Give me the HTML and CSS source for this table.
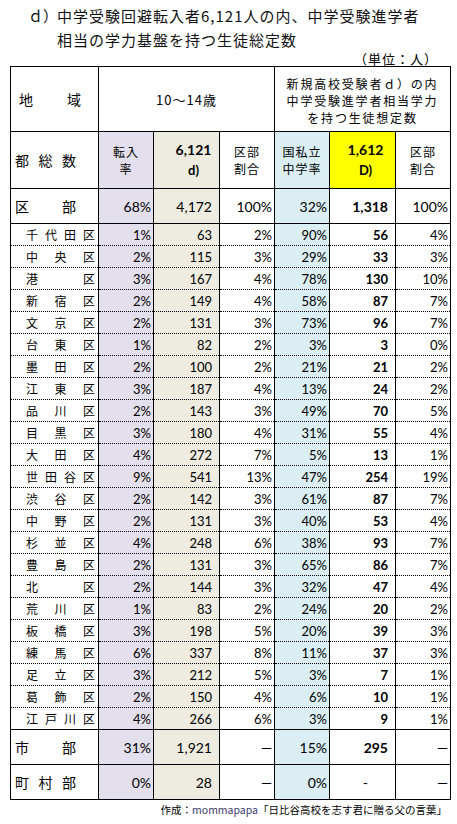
FILE: index.html
```html
<!DOCTYPE html>
<html lang="ja">
<head>
    <meta charset="UTF-8">
    <title>中学受験進学者相当の学力基盤を持つ生徒総定数</title>
    <link rel="stylesheet" href="styles.css">
</head>

<body>
    <!-- タイトル -->
    <div class="title">
        <span class="mark">ｄ）</span>
        <p>中学受験回避転入者6,121人の内、中学受験進学者<br>相当の学力基盤を持つ生徒総定数</p>
    </div>
    <p class="unit">（単位：人）</p>

    <table class="sheet">
        <colgroup>
            <col class="c1">
            <col class="c2">
            <col class="c3">
            <col class="c4">
            <col class="c5">
            <col class="c6">
            <col class="c7">
        </colgroup>
        <tr class="head1">
            <th class="area">地域</th>
            <th colspan="3">10〜14歳</th>
            <th colspan="3" class="note">新規高校受験者ｄ）の内<br>中学受験進学者相当学力<br>を持つ生徒想定数</th>
        </tr>
        <tr class="head2">
            <th class="big">都総数</th>
            <th class="lav">転入<br>率</th>
            <th class="beige num2"><b>6,121</b><b class="sub">d)</b></th>
            <th>区部<br>割合</th>
            <th class="blue">国私立<br>中学率</th>
            <th class="yellow num2"><b>1,612</b><b class="sub">D)</b></th>
            <th>区部<br>割合</th>
        </tr>
        <tr class="total">
            <td class="big">区部</td>
            <td class="lav">68%</td>
            <td class="beige cnt">4,172</td>
            <td>100%</td>
            <td class="blue">32%</td>
            <td class="bold cnt">1,318</td>
            <td>100%</td>
        </tr>
        <tr class="ward"><td class="nm">千代田区</td><td class="lav">1%</td><td class="beige cnt">63</td><td>2%</td><td class="blue">90%</td><td class="bold cnt">56</td><td>4%</td></tr>
        <tr class="ward"><td class="nm">中央区</td><td class="lav">2%</td><td class="beige cnt">115</td><td>3%</td><td class="blue">29%</td><td class="bold cnt">33</td><td>3%</td></tr>
        <tr class="ward"><td class="nm">港区</td><td class="lav">3%</td><td class="beige cnt">167</td><td>4%</td><td class="blue">78%</td><td class="bold cnt">130</td><td>10%</td></tr>
        <tr class="ward"><td class="nm">新宿区</td><td class="lav">2%</td><td class="beige cnt">149</td><td>4%</td><td class="blue">58%</td><td class="bold cnt">87</td><td>7%</td></tr>
        <tr class="ward"><td class="nm">文京区</td><td class="lav">2%</td><td class="beige cnt">131</td><td>3%</td><td class="blue">73%</td><td class="bold cnt">96</td><td>7%</td></tr>
        <tr class="ward"><td class="nm">台東区</td><td class="lav">1%</td><td class="beige cnt">82</td><td>2%</td><td class="blue">3%</td><td class="bold cnt">3</td><td>0%</td></tr>
        <tr class="ward"><td class="nm">墨田区</td><td class="lav">2%</td><td class="beige cnt">100</td><td>2%</td><td class="blue">21%</td><td class="bold cnt">21</td><td>2%</td></tr>
        <tr class="ward"><td class="nm">江東区</td><td class="lav">3%</td><td class="beige cnt">187</td><td>4%</td><td class="blue">13%</td><td class="bold cnt">24</td><td>2%</td></tr>
        <tr class="ward"><td class="nm">品川区</td><td class="lav">2%</td><td class="beige cnt">143</td><td>3%</td><td class="blue">49%</td><td class="bold cnt">70</td><td>5%</td></tr>
        <tr class="ward"><td class="nm">目黒区</td><td class="lav">3%</td><td class="beige cnt">180</td><td>4%</td><td class="blue">31%</td><td class="bold cnt">55</td><td>4%</td></tr>
        <tr class="ward"><td class="nm">大田区</td><td class="lav">4%</td><td class="beige cnt">272</td><td>7%</td><td class="blue">5%</td><td class="bold cnt">13</td><td>1%</td></tr>
        <tr class="ward"><td class="nm">世田谷区</td><td class="lav">9%</td><td class="beige cnt">541</td><td>13%</td><td class="blue">47%</td><td class="bold cnt">254</td><td>19%</td></tr>
        <tr class="ward"><td class="nm">渋谷区</td><td class="lav">2%</td><td class="beige cnt">142</td><td>3%</td><td class="blue">61%</td><td class="bold cnt">87</td><td>7%</td></tr>
        <tr class="ward"><td class="nm">中野区</td><td class="lav">2%</td><td class="beige cnt">131</td><td>3%</td><td class="blue">40%</td><td class="bold cnt">53</td><td>4%</td></tr>
        <tr class="ward"><td class="nm">杉並区</td><td class="lav">4%</td><td class="beige cnt">248</td><td>6%</td><td class="blue">38%</td><td class="bold cnt">93</td><td>7%</td></tr>
        <tr class="ward"><td class="nm">豊島区</td><td class="lav">2%</td><td class="beige cnt">131</td><td>3%</td><td class="blue">65%</td><td class="bold cnt">86</td><td>7%</td></tr>
        <tr class="ward"><td class="nm">北区</td><td class="lav">2%</td><td class="beige cnt">144</td><td>3%</td><td class="blue">32%</td><td class="bold cnt">47</td><td>4%</td></tr>
        <tr class="ward"><td class="nm">荒川区</td><td class="lav">1%</td><td class="beige cnt">83</td><td>2%</td><td class="blue">24%</td><td class="bold cnt">20</td><td>2%</td></tr>
        <tr class="ward"><td class="nm">板橋区</td><td class="lav">3%</td><td class="beige cnt">198</td><td>5%</td><td class="blue">20%</td><td class="bold cnt">39</td><td>3%</td></tr>
        <tr class="ward"><td class="nm">練馬区</td><td class="lav">6%</td><td class="beige cnt">337</td><td>8%</td><td class="blue">11%</td><td class="bold cnt">37</td><td>3%</td></tr>
        <tr class="ward"><td class="nm">足立区</td><td class="lav">3%</td><td class="beige cnt">212</td><td>5%</td><td class="blue">3%</td><td class="bold cnt">7</td><td>1%</td></tr>
        <tr class="ward"><td class="nm">葛飾区</td><td class="lav">2%</td><td class="beige cnt">150</td><td>4%</td><td class="blue">6%</td><td class="bold cnt">10</td><td>1%</td></tr>
        <tr class="ward last"><td class="nm">江戸川区</td><td class="lav">4%</td><td class="beige cnt">266</td><td>6%</td><td class="blue">3%</td><td class="bold cnt">9</td><td>1%</td></tr>
        <tr class="total">
            <td class="big">市部</td>
            <td class="lav">31%</td>
            <td class="beige cnt">1,921</td>
            <td>—</td>
            <td class="blue">15%</td>
            <td class="bold cnt">295</td>
            <td>—</td>
        </tr>
        <tr class="total">
            <td class="big">町村部</td>
            <td class="lav">0%</td>
            <td class="beige cnt">28</td>
            <td>—</td>
            <td class="blue">0%</td>
            <td class="cnt hy">-</td>
            <td>—</td>
        </tr>
    </table>

    <p class="credit">作成：<span class="who">mommapapa</span>「日比谷高校を志す君に贈る父の言葉」</p>
</body>

</html>
```

FILE: styles.css
```css
* {
    padding: 0;
    margin: 0;
}

body {
    width: 457px;
    background: #fff;
    color: #000;
    font-family: "Noto Sans CJK JP", sans-serif;
}

/* タイトル */
.title {
    display: flex;
    padding: 4px 0 0 28px;
    font-size: 15px;
    line-height: 24px;
    letter-spacing: 1px;
    color: #111;
}

.title .mark {
    flex: none;
    width: 29px;
    letter-spacing: 0;
}

.title p {
    white-space: nowrap;
}

.unit {
    text-align: right;
    padding-right: 19px;
    font-size: 13px;
    line-height: 14px;
    letter-spacing: 1px;
}

/* 表 */
.sheet {
    margin-left: 10px;
    width: 440px;
    table-layout: fixed;
    border-collapse: collapse;
    font-family: Lato, "Noto Sans CJK JP", sans-serif;
    font-size: 13px;
}

.sheet col.c1 { width: 88px; }
.sheet col.c2 { width: 55px; }
.sheet col.c3 { width: 66px; }
.sheet col.c4 { width: 55px; }
.sheet col.c5 { width: 55px; }
.sheet col.c6 { width: 66px; }
.sheet col.c7 { width: 55px; }

.sheet th,
.sheet td {
    border: 1px solid #000;
    padding: 0 2px 0 0;
    text-align: right;
    vertical-align: middle;
    white-space: nowrap;
}

.sheet th {
    font-weight: normal;
    text-align: center;
    font-family: "Noto Sans CJK JP", sans-serif;
    font-size: 12px;
    line-height: 17px;
    letter-spacing: 1px;
    padding: 0;
}

.head1 {
    height: 65px;
}

.head1 .area {
    text-align: justify;
    text-align-last: justify;
    padding: 0 16px 0 8px;
    font-size: 14px;
}

.head1 th {
    font-size: 13px;
}

.head1 .note {
    font-size: 12px;
    letter-spacing: 1.8px;
    line-height: 17px;
    padding-top: 2px;
}

.head2 {
    height: 57px;
}

.head2 .num2 b {
    display: block;
    font-family: Lato, sans-serif;
    font-size: 14px;
    line-height: 20px;
    letter-spacing: 0;
    padding-left: 14px;
}

.head2 .yellow b {
    padding-left: 6px;
}

.head2 .num2 .sub {
    font-size: 13px;
}

.sheet .big {
    text-align: justify;
    text-align-last: justify;
    padding: 0 22px 0 4px;
    font-family: "Noto Sans CJK JP", sans-serif;
    font-size: 14px;
    font-weight: normal;
    letter-spacing: 0;
}

.total {
    height: 35px;
}

.total td {
    font-size: 14px;
}

.ward {
    height: 22px;
}

.ward td {
    border-bottom: 1px dotted #000;
    border-top: 1px dotted #000;
}

.ward.last td {
    border-bottom: 1px solid #000;
}

.ward .nm {
    text-align: justify;
    text-align-last: justify;
    padding: 0 3px 0 15px;
    font-family: "Noto Sans CJK JP", sans-serif;
    font-size: 12px;
}

.sheet .cnt {
    padding-right: 7px;
}

.sheet .bold {
    font-weight: bold;
}

.sheet .hy {
    padding-right: 27px;
}

.lav {
    background: #e4dfec;
}

.beige {
    background: #eeece1;
}

.blue {
    background: #daeef3;
}

.yellow {
    background: #ffff00;
}

/* 作成 */
.credit {
    text-align: right;
    padding: 2px 10px 0 0;
    font-size: 10.5px;
    line-height: 16px;
}

.credit .who {
    color: #3a3a6a;
}
```
